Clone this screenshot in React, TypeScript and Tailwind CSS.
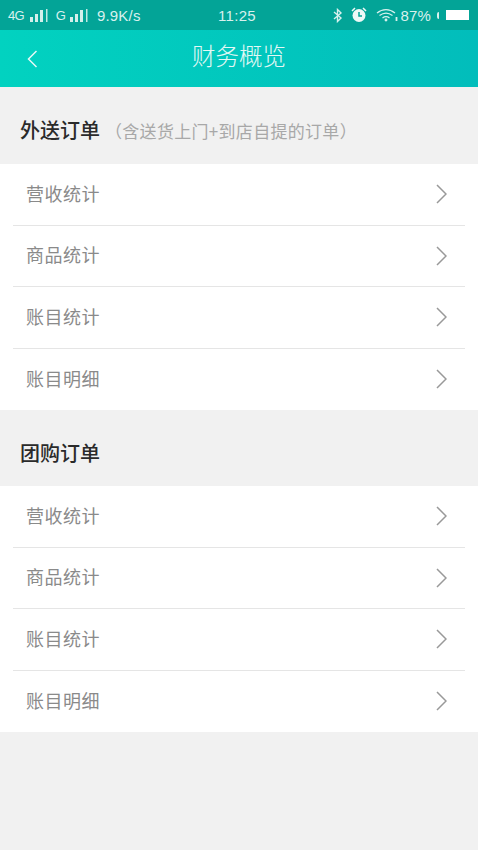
const font = { fontFamily: '"Noto Sans CJK SC", "Noto Sans", sans-serif' };

function Signal({ className }: { className: string }) {
  return (
    <svg className={className} width="19" height="13" viewBox="0 0 19 13" fill="#d3efeb">
      <rect x="0" y="8" width="3" height="5" />
      <rect x="5" y="5" width="3" height="8" />
      <rect x="10" y="1" width="3" height="12" />
      <rect x="16" y="0" width="1.500" height="13" opacity="0.9" />
    </svg>
  );
}

function StatusBar() {
  return (
    <div
      className="flex h-[30px] items-center bg-[#03a497] text-[#d8f1ee]"
      style={{ fontFamily: '"Liberation Sans", sans-serif' }}
    >
      <div className="flex w-[200px] items-center pl-[8px] text-[13px] leading-none">
        <span className="tracking-[-0.8px]">4G</span>
        <Signal className="ml-[6px]" />
        <span className="ml-[7px]">G</span>
        <Signal className="ml-[4px]" />
        <span className="ml-[8px] text-[15px] tracking-[0.2px]">9.9K/s</span>
      </div>
      <span className="ml-[18px] text-[15px] leading-none tracking-[0.3px]">11:25</span>
      <div className="ml-auto flex items-center text-[15px] leading-none">
        <svg width="10" height="15" viewBox="0 0 10 15" fill="none" stroke="#d8f1ee" strokeWidth="1.400">
          <path d="M1 4l7 6-3.500 3.500v-12L8 5l-7 6" />
        </svg>
        <svg className="ml-[8px]" width="16" height="16" viewBox="0 0 16 16">
          <circle cx="8" cy="8.500" r="6.500" fill="#eef9f7" />
          <path d="M8 5v4h3" fill="none" stroke="#03a497" strokeWidth="1.500" />
          <path d="M1 4l3-3M15 4l-3-3" stroke="#eef9f7" strokeWidth="1.500" />
        </svg>
        <svg className="ml-[9px]" width="22" height="14" viewBox="0 0 22 14" fill="none" stroke="#d8f1ee" strokeWidth="1.300">
          <path d="M1 5c5.500-4.500 12.500-4.500 18 0M3.500 7.500c4-3 9-3 13 0M6.500 10c2-1.500 5-1.500 7 0" />
          <circle cx="10" cy="12" r="0.800" fill="#d8f1ee" />
          <path d="M20.500 9v4" strokeWidth="1.800" />
        </svg>
        <span className="ml-[2px] tracking-[0.2px]">87%</span>
        <span className="ml-[6px] h-[7px] w-[2px] rounded-l-full bg-[#d8f1ee]" />
        <span className="ml-[7px] mr-[9px] h-[10px] w-[23px] bg-white" />
      </div>
    </div>
  );
}

function Row({ label, last }: { label: string; last?: boolean }) {
  return (
    <div className="px-[13px]">
      <div className={`flex h-[61.5px] items-center justify-between ${last ? "" : "border-b border-[#e5e5e5]"}`}>
        <span className="mb-[3px] pl-[13px] text-[18px] leading-none tracking-[0.5px] text-[#8a8a8a]">{label}</span>
        <svg className="mr-[18px]" width="11" height="20" viewBox="0 0 11 20" fill="none" stroke="#999999" strokeWidth="1.500">
          <path d="M1 1l9 9-9 9" />
        </svg>
      </div>
    </div>
  );
}

function Section({ title, note, head }: { title: string; note?: string; head: string }) {
  return (
    <div>
      <div className={`flex items-center bg-[#f1f1f1] pl-[20px] ${head}`}>
        <span className="text-[20px] font-medium leading-none text-[#2a2a2a]">{title}</span>
        {note && <span className="ml-[5px] text-[17px] leading-none tracking-[0.3px] text-[#a8a8a8]">{note}</span>}
      </div>
      <div className="bg-white">
        <Row label="营收统计" />
        <Row label="商品统计" />
        <Row label="账目统计" />
        <Row label="账目明细" last />
      </div>
    </div>
  );
}

export default function App() {
  return (
    <div className="flex h-[850px] w-[478px] flex-col overflow-hidden bg-[#f1f1f1]" style={font}>
      <StatusBar />
      <header className="relative flex h-[57px] items-center justify-center bg-gradient-to-r from-[#02d2c0] to-[#02bdbb]">
        <svg className="absolute left-[27px] top-[20px]" width="11" height="18" viewBox="0 0 11 18" fill="none" stroke="#e6f9f7" strokeWidth="1.500">
          <path d="M9.500 1L1.500 9l8 8" />
        </svg>
        <h1 className="mb-[5px] text-[23.5px] font-light leading-none text-[#e2f8f5]">财务概览</h1>
      </header>
      <Section title="外送订单" note="（含送货上门+到店自提的订单）" head="h-[77px] pt-[9px]" />
      <Section title="团购订单" head="h-[76px] pt-[10px]" />
    </div>
  );
}
